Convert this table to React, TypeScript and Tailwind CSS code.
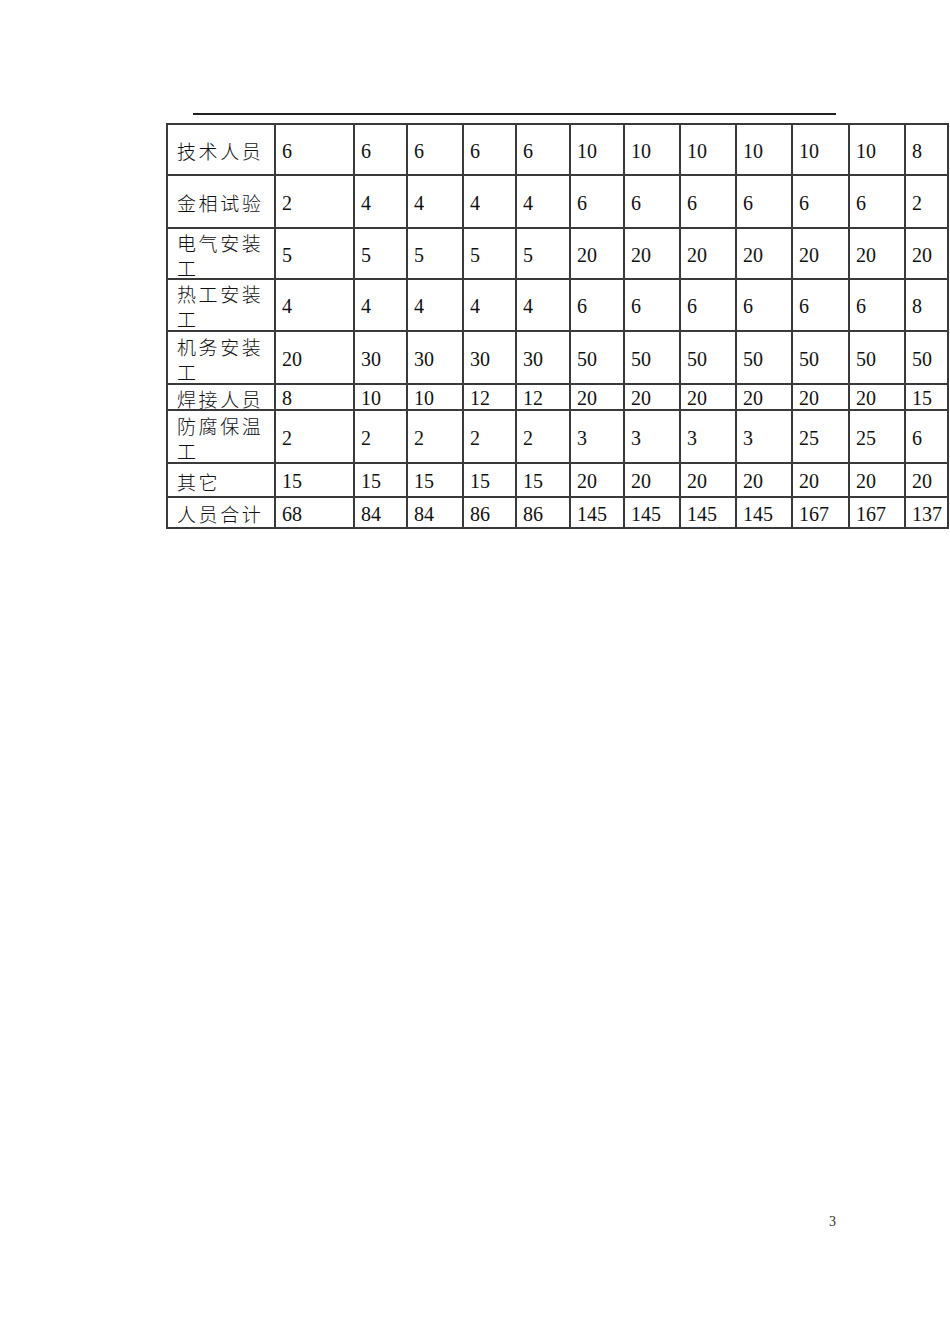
import React from "react";

type Row = { label: React.ReactNode; vals: string[] };

const rows: Row[] = [
  { label: "技术人员", vals: ["6", "6", "6", "6", "6", "10", "10", "10", "10", "10", "10", "8"] },
  { label: "金相试验", vals: ["2", "4", "4", "4", "4", "6", "6", "6", "6", "6", "6", "2"] },
  { label: <>电气安装<br />工</>, vals: ["5", "5", "5", "5", "5", "20", "20", "20", "20", "20", "20", "20"] },
  { label: <>热工安装<br />工</>, vals: ["4", "4", "4", "4", "4", "6", "6", "6", "6", "6", "6", "8"] },
  { label: <>机务安装<br />工</>, vals: ["20", "30", "30", "30", "30", "50", "50", "50", "50", "50", "50", "50"] },
  { label: "焊接人员", vals: ["8", "10", "10", "12", "12", "20", "20", "20", "20", "20", "20", "15"] },
  { label: <>防腐保温<br />工</>, vals: ["2", "2", "2", "2", "2", "3", "3", "3", "3", "25", "25", "6"] },
  { label: "其它", vals: ["15", "15", "15", "15", "15", "20", "20", "20", "20", "20", "20", "20"] },
  { label: "人员合计", vals: ["68", "84", "84", "86", "86", "145", "145", "145", "145", "167", "167", "137"] },
];

const cell =
  "border-l-2 border-t-2 border-[#3a3a3a] flex items-center whitespace-nowrap overflow-visible";

export default function App() {
  return (
    <div className="w-[950px] h-[1344px] bg-white flex flex-col overflow-hidden text-black">
      <div className="mt-[113px] ml-[193px] w-[643px] h-[2px] bg-[#222]" />
      <div className="mt-[8px] ml-[166px] w-[783px] grid grid-cols-[108px_79px_53px_56px_53px_54px_54px_56px_56px_56px_57px_56px_43px] grid-rows-[51px_53px_51px_52px_53px_26px_53px_34px_31px] border-r-2 border-b-2 border-[#3a3a3a]">
        {rows.map((r, ri) => (
          <React.Fragment key={ri}>
            <div className={cell}>
              <span className="pl-[9px] pt-[2px] text-[19px] leading-[25px] tracking-[2.6px] font-light text-[#111] font-['Noto_Sans_CJK_SC',sans-serif]">
                {r.label}
              </span>
            </div>
            {r.vals.map((v, ci) => (
              <div key={ci} className={cell}>
                <span className="pl-[6px] pt-[2px] text-[20px] leading-[22px] text-[#111] font-['Liberation_Serif',serif]">
                  {v}
                </span>
              </div>
            ))}
          </React.Fragment>
        ))}
      </div>
      <div className="mt-auto pb-[112px] pl-[829px]">
        <span className="text-[14px] leading-[16px] text-[#333] font-['Liberation_Serif',serif]">
          3
        </span>
      </div>
    </div>
  );
}
